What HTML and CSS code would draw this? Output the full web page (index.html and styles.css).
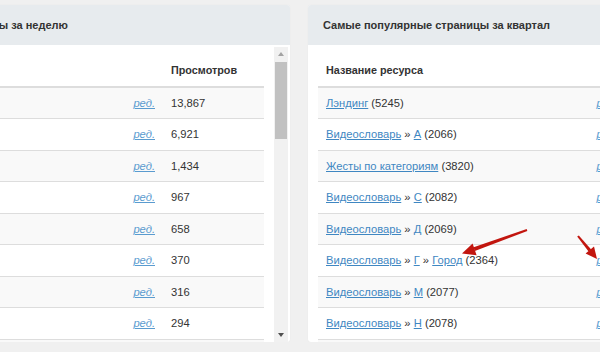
FILE: index.html
```html
<!DOCTYPE html>
<html lang="ru">
<head>
    <meta charset="UTF-8">
    <title>Популярные страницы</title>
    <link rel="stylesheet" href="styles.css">
</head>
<body>
    <div class="dashboard">
        <div class="panel">
            <div class="panel-heading">Самые популярные страницы за неделю</div>
            <div class="panel-body">
                <div class="scroll-content">
                    <table class="stats stats-week">
                        <thead>
                            <tr>
                                <th>Название ресурса</th>
                                <th class="col-edit"></th>
                                <th class="col-views">Просмотров</th>
                            </tr>
                        </thead>
                        <tbody>
                            <tr><td><a href="#">Лэндинг</a></td><td class="col-edit"><a class="edit" href="#">ред.</a></td><td class="col-views">13,867</td></tr>
                            <tr><td><a href="#">Главная</a></td><td class="col-edit"><a class="edit" href="#">ред.</a></td><td class="col-views">6,921</td></tr>
                            <tr><td><a href="#">Алфавит</a></td><td class="col-edit"><a class="edit" href="#">ред.</a></td><td class="col-views">1,434</td></tr>
                            <tr><td><a href="#">Город</a></td><td class="col-edit"><a class="edit" href="#">ред.</a></td><td class="col-views">967</td></tr>
                            <tr><td><a href="#">Жесты</a></td><td class="col-edit"><a class="edit" href="#">ред.</a></td><td class="col-views">658</td></tr>
                            <tr><td><a href="#">Буква А</a></td><td class="col-edit"><a class="edit" href="#">ред.</a></td><td class="col-views">370</td></tr>
                            <tr><td><a href="#">Буква С</a></td><td class="col-edit"><a class="edit" href="#">ред.</a></td><td class="col-views">316</td></tr>
                            <tr><td><a href="#">Буква Д</a></td><td class="col-edit"><a class="edit" href="#">ред.</a></td><td class="col-views">294</td></tr>
                            <tr><td><a href="#">Буква М</a></td><td class="col-edit"><a class="edit" href="#">ред.</a></td><td class="col-views">281</td></tr>
                        </tbody>
                    </table>
                </div>
                <div class="scrollbar">
                    <span class="arrow-up"></span>
                    <span class="thumb"></span>
                    <span class="arrow-down"></span>
                </div>
            </div>
        </div>

        <div class="panel">
            <div class="panel-heading">Самые популярные страницы за квартал</div>
            <div class="panel-body">
                <div class="scroll-content">
                    <table class="stats stats-quarter">
                        <thead>
                            <tr>
                                <th>Название ресурса</th>
                                <th class="col-edit"></th>
                                <th class="col-views">Просмотров</th>
                            </tr>
                        </thead>
                        <tbody>
                            <tr><td><a href="#">Лэндинг</a> (5245)</td><td class="col-edit"><a class="edit" href="#">ред.</a></td><td class="col-views">52,118</td></tr>
                            <tr><td><a href="#">Видеословарь</a> » <a href="#">А</a> (2066)</td><td class="col-edit"><a class="edit" href="#">ред.</a></td><td class="col-views">24,310</td></tr>
                            <tr><td><a href="#">Жесты по категориям</a> (3820)</td><td class="col-edit"><a class="edit" href="#">ред.</a></td><td class="col-views">9,874</td></tr>
                            <tr><td><a href="#">Видеословарь</a> » <a href="#">С</a> (2082)</td><td class="col-edit"><a class="edit" href="#">ред.</a></td><td class="col-views">4,126</td></tr>
                            <tr><td><a href="#">Видеословарь</a> » <a href="#">Д</a> (2069)</td><td class="col-edit"><a class="edit" href="#">ред.</a></td><td class="col-views">3,052</td></tr>
                            <tr><td><a href="#">Видеословарь</a> » <a href="#">Г</a> » <a href="#">Город</a> (2364)</td><td class="col-edit"><a class="edit" href="#">ред.</a></td><td class="col-views">2,741</td></tr>
                            <tr><td><a href="#">Видеословарь</a> » <a href="#">М</a> (2077)</td><td class="col-edit"><a class="edit" href="#">ред.</a></td><td class="col-views">1,908</td></tr>
                            <tr><td><a href="#">Видеословарь</a> » <a href="#">Н</a> (2078)</td><td class="col-edit"><a class="edit" href="#">ред.</a></td><td class="col-views">1,655</td></tr>
                            <tr><td><a href="#">Видеословарь</a> » <a href="#">О</a> (2071)</td><td class="col-edit"><a class="edit" href="#">ред.</a></td><td class="col-views">1,402</td></tr>
                        </tbody>
                    </table>
                </div>
            </div>
        </div>
    </div>

    <svg class="annotations" width="600" height="352" viewBox="0 0 600 352">
        <polygon points="527.3,231 526.7,229 473.6,247.2 474.8,251" />
        <polygon points="462,253.5 476.6,255.2 472.6,243.6" />
        <polygon points="578.8,235.6 577.2,236.6 588.6,251.4 591.2,249.4" />
        <polygon points="597,259 594,246.6 585.6,253.4" />
    </svg>
</body>
</html>
```

FILE: styles.css
```css
* {
    box-sizing: border-box;
}

body {
    margin: 0;
    background: #f0f0f0;
    font-family: 'Liberation Sans', Arial, sans-serif;
    font-size: 11.2px;
    color: #333;
    overflow: hidden;
}

a {
    color: #3f87c2;
}

.dashboard {
    display: flex;
    gap: 18px;
    margin-left: -173px;
    padding-top: 5px;
}

.panel {
    flex: none;
    width: 463px;
    background: #fff;
    border-radius: 3px;
    box-shadow: 0 0 1px rgba(0, 0, 0, 0.08);
    overflow: hidden;
}

.panel-heading {
    height: 40px;
    line-height: 40px;
    padding: 0 15px;
    background: #e7ebee;
    font-size: 11px;
    font-weight: bold;
    white-space: nowrap;
}

.panel-body {
    display: flex;
    height: 297px;
    overflow: hidden;
}

.scroll-content {
    flex: 1;
    padding: 0 10px;
    overflow: hidden;
}

.stats {
    width: 100%;
    margin-top: 10px;
    border-collapse: collapse;
}

.stats th,
.stats td {
    padding: 7px 8px;
    line-height: 16.5px;
    text-align: left;
    white-space: nowrap;
}

.stats th {
    font-size: 10.8px;
    font-weight: bold;
    border-bottom: 2px solid #ddd;
}

.stats td {
    border-top: 1px solid #ddd;
}

.stats tbody tr:nth-child(odd) {
    background: #f9f9f9;
}

.stats .col-edit {
    text-align: right;
}

.stats-week .col-views {
    width: 101px;
}

.stats-quarter .col-views {
    width: 135px;
}

.edit {
    font-style: italic;
    color: #5a9bcf;
}

.scrollbar {
    flex: none;
    display: flex;
    flex-direction: column;
    align-items: center;
    width: 14px;
    margin: 2px 2px 0 0;
    padding: 0 1px;
    background: #f1f1f1;
}

.arrow-up,
.arrow-down {
    width: 0;
    height: 0;
    border-left: 3.5px solid transparent;
    border-right: 3.5px solid transparent;
}

.arrow-up {
    margin: 5px 0 6px;
    border-bottom: 4px solid #a3a3a3;
}

.thumb {
    width: 12px;
    height: 77px;
    background: #c1c1c1;
}

.arrow-down {
    margin: auto 0 5px;
    border-top: 4px solid #505050;
}

.annotations {
    position: fixed;
    top: 0;
    left: 0;
    pointer-events: none;
    fill: #c2160f;
}
```
